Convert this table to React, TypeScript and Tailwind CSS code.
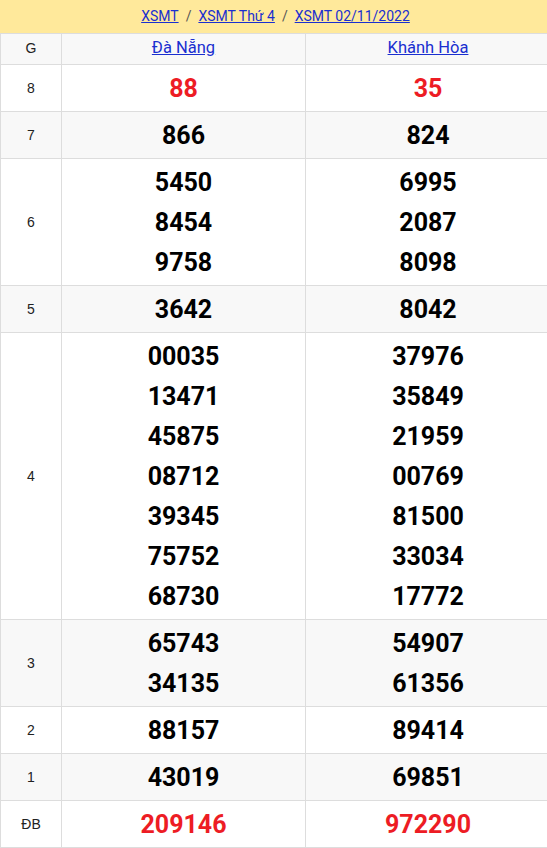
import React from "react";

type Row = { g: string; a: string[]; b: string[]; red?: boolean };

const rows: Row[] = [
  { g: "8", a: ["88"], b: ["35"], red: true },
  { g: "7", a: ["866"], b: ["824"] },
  { g: "6", a: ["5450", "8454", "9758"], b: ["6995", "2087", "8098"] },
  { g: "5", a: ["3642"], b: ["8042"] },
  {
    g: "4",
    a: ["00035", "13471", "45875", "08712", "39345", "75752", "68730"],
    b: ["37976", "35849", "21959", "00769", "81500", "33034", "17772"],
  },
  { g: "3", a: ["65743", "34135"], b: ["54907", "61356"] },
  { g: "2", a: ["88157"], b: ["89414"] },
  { g: "1", a: ["43019"], b: ["69851"] },
  { g: "ĐB", a: ["209146"], b: ["972290"], red: true },
];

function Nums({ list, red }: { list: string[]; red?: boolean }) {
  return (
    <td className="border border-[#dddddd] pt-[4px] pb-[2px] text-center align-middle">
      {list.map((n) => (
        <div
          key={n}
          className={`h-[40px] leading-[40px] text-[25px] font-bold ${red ? "text-[#ed1c24]" : "text-black"}`}
        >
          {n}
        </div>
      ))}
    </td>
  );
}

export default function App() {
  return (
    <div className="w-[547px] overflow-hidden bg-white">
      <div className="w-[551px] font-['Roboto',sans-serif]">
        {/* Breadcrumb */}
        <div className="h-[34px] bg-[#ffe99b] border-b border-[#dddddd] flex items-center justify-center gap-[7px] text-[14px] text-[#555]">
          <a href="#" className="text-[#1a2fd0] underline">XSMT</a>
          <span>/</span>
          <a href="#" className="text-[#1a2fd0] underline">XSMT Thứ 4</a>
          <span>/</span>
          <a href="#" className="text-[#1a2fd0] underline">XSMT 02/11/2022</a>
        </div>

        <table className="w-full border-collapse table-fixed">
          <colgroup>
            <col className="w-[61px]" />
            <col className="w-[244px]" />
            <col />
          </colgroup>
          <thead>
            <tr className="h-[30px] bg-[#f8f8f8]">
              <th className="border border-t-0 border-[#dddddd] font-normal text-[14px] text-[#222] font-['Liberation_Sans',sans-serif]">
                G
              </th>
              <th className="border border-t-0 border-[#dddddd] font-normal text-[16.5px]">
                <a href="#" className="text-[#1a2fd0] underline">Đà Nẵng</a>
              </th>
              <th className="border border-t-0 border-[#dddddd] font-normal text-[16.5px]">
                <a href="#" className="text-[#1a2fd0] underline">Khánh Hòa</a>
              </th>
            </tr>
          </thead>
          <tbody>
            {rows.map((r, i) => (
              <tr key={r.g} className={i % 2 === 0 ? "bg-white" : "bg-[#f8f8f8]"}>
                <td className="border border-[#dddddd] pt-[2px] text-center align-middle text-[14px] text-[#222] font-['Liberation_Sans',sans-serif]">
                  {r.g}
                </td>
                <Nums list={r.a} red={r.red} />
                <Nums list={r.b} red={r.red} />
              </tr>
            ))}
          </tbody>
        </table>
      </div>
    </div>
  );
}
